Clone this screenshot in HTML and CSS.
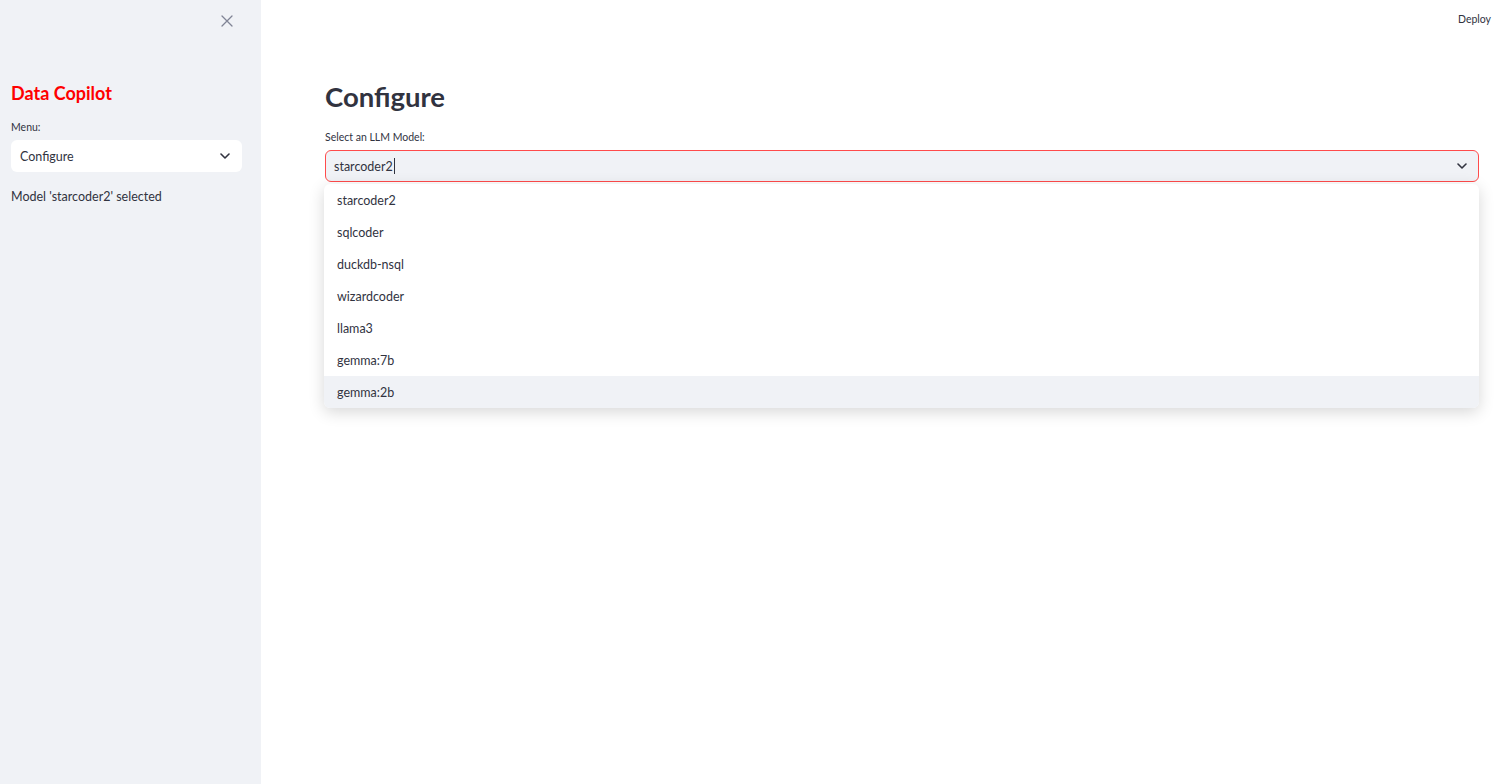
FILE: index.html
```html
<!DOCTYPE html>
<html lang="en">
<head>
<meta charset="utf-8">
<title>Data Copilot</title>
<link rel="stylesheet" href="styles.css">
</head>
<body>
<div class="app">
  <aside class="sidebar">
    <div class="sidebar-top">
      <button class="close-btn" aria-label="Close sidebar">
        <svg width="12" height="12" viewBox="0 0 12 12"><path d="M1 1 L11 11 M11 1 L1 11" stroke="#808495" stroke-width="1.3" fill="none" stroke-linecap="round"/></svg>
      </button>
    </div>
    <div class="sidebar-content">
      <h2 class="brand">Data Copilot</h2>
      <div class="field">
        <label class="label">Menu:</label>
        <div class="select select-white">
          <span>Configure</span>
          <svg class="chev" width="10" height="6" viewBox="0 0 10 6"><path d="M1 1 L5 5 L9 1" stroke="#31333f" stroke-width="1.6" fill="none" stroke-linecap="round" stroke-linejoin="round"/></svg>
        </div>
      </div>
      <p class="msg">Model 'starcoder2' selected</p>
    </div>
  </aside>
  <main class="main">
    <header class="topbar"><span class="deploy">Deploy</span></header>
    <section class="block">
      <h1 class="title">Configure</h1>
      <div class="field">
        <label class="label">Select an LLM Model:</label>
        <div class="select-wrap">
          <div class="select select-grey focused">
            <span class="value">starcoder2<span class="caret"></span></span>
            <svg class="chev" width="10" height="6" viewBox="0 0 10 6"><path d="M1 1 L5 5 L9 1" stroke="#31333f" stroke-width="1.6" fill="none" stroke-linecap="round" stroke-linejoin="round"/></svg>
          </div>
          <ul class="menu">
            <li>starcoder2</li>
            <li>sqlcoder</li>
            <li>duckdb-nsql</li>
            <li>wizardcoder</li>
            <li>llama3</li>
            <li>gemma:7b</li>
            <li class="hover">gemma:2b</li>
          </ul>
        </div>
      </div>
    </section>
  </main>
</div>
</body>
</html>
```
FILE: styles.css
```css
* { box-sizing: border-box; }
html, body { margin: 0; padding: 0; height: 100%; }
body {
  font-family: Lato, "Open Sans", sans-serif;
  color: #31333f;
  background: #fff;
}
.app { display: flex; height: 784px; overflow: hidden; }
.sidebar {
  width: 261px;
  flex: none;
  background: #f0f2f6;
  height: 100%;
}
.sidebar-top {
  display: flex;
  justify-content: flex-end;
  padding: 14px 27px 0 0;
  height: 60px;
}
.close-btn {
  border: none; background: transparent; padding: 0;
  width: 14px; height: 14px;
  display: flex; align-items: center; justify-content: center;
}
.sidebar-content { padding: 21px 19px 0 11px; }
.brand {
  margin: 0;
  color: #ff0000;
  font-size: 18px;
  font-weight: 700;
  line-height: 24px;
}
.field { display: flex; flex-direction: column; }
.sidebar .field { margin-top: 15px; }
.label {
  font-size: 10.5px;
  line-height: 14px;
  margin-bottom: 6px;
  color: #31333f;
}
.select {
  height: 32px;
  border-radius: 6px;
  display: flex;
  align-items: center;
  justify-content: space-between;
  padding: 0 12px 0 9px;
  font-size: 12.5px;
}
.select-white { background: #fff; }
.select-grey { background: #f0f2f6; }
.focused { border: 1px solid #ff4b4b; padding-left: 8px; padding-right: 11px; }
.chev { flex: none; }
.msg { margin: 16px 0 0; font-size: 12.5px; line-height: 18px; }
.main { flex: 1; display: flex; flex-direction: column; }
.topbar {
  height: 37px;
  display: flex;
  justify-content: flex-end;
  align-items: center;
  padding-right: 5px;
}
.deploy { font-size: 10.5px; color: #31333f; }
.block { padding: 43px 17px 0 64px; }
.title {
  margin: 0;
  font-size: 27.5px;
  font-weight: 700;
  line-height: 34px;
  color: #31333f;
}
.block .field { margin-top: 16px; }
.select-wrap { position: relative; }
.value { display: flex; align-items: center; }
.caret {
  display: inline-block;
  width: 1px; height: 16px;
  background: #31333f;
  margin-left: 1px;
}
.menu {
  position: absolute;
  top: 34px;
  left: -1px;
  right: 0;
  margin: 0;
  padding: 0;
  list-style: none;
  background: #fff;
  border-radius: 6px;
  overflow: hidden;
  box-shadow: 0 4px 16px rgba(0,0,0,0.16);
}
.menu li {
  height: 32px;
  display: flex;
  align-items: center;
  padding-left: 13px;
  font-size: 12.5px;
}
.menu li.hover { background: #f0f2f6; }
```
